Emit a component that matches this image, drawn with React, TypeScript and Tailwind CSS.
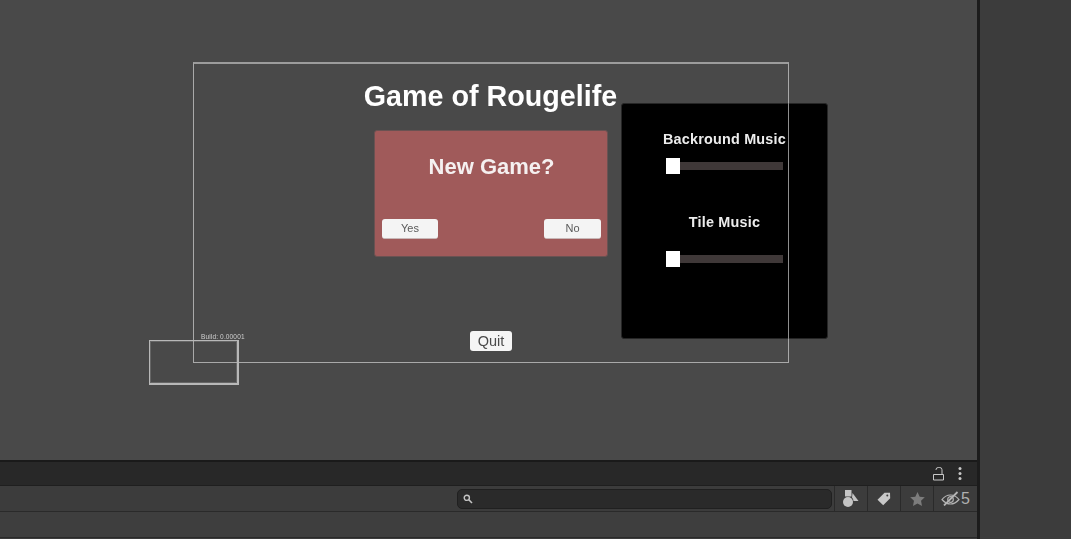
const sans = "font-['Liberation_Sans',Arial,sans-serif]";

function SliderLabel({ label, className }: { label: string; className: string }) {
  return (
    <div className={`flex flex-col items-center ${className}`}>
      <span className="text-[14.4px] leading-[17px] font-bold tracking-[0.2px] text-[#ececec] blur-[0.4px] whitespace-nowrap">
        {label}
      </span>
    </div>
  );
}

function Slider({ top }: { top: string }) {
  return (
    <div className={`absolute left-[44px] w-[117px] h-4 flex items-center ${top}`}>
      <div className="ml-[7px] h-2 w-[110px] bg-[#3f3838]" />
      <div className="absolute left-0 top-0 h-4 w-[14px] bg-white" />
    </div>
  );
}

function GameCanvas() {
  return (
    <>
      <div className="absolute left-[193px] top-[62px] h-[301px] w-[596px] border border-t-2 border-[#a9a9a9] border-t-[#9c9c9c]" />
      <h1 className="absolute left-[193px] top-[78px] w-[595px] text-center text-[28.7px] leading-9 font-bold text-white blur-[0.4px]">
        Game of Rougelife
      </h1>

      <div className="absolute left-[374px] top-[130px] h-[127px] w-[234px] rounded-[3px] border border-[#6a5252] bg-[#a05a5a] flex flex-col justify-between pl-[7px] pr-[6px] pt-[22px] pb-[17px]">
        <h2 className="text-center text-[22px] leading-7 font-bold text-[#f5f0f0] blur-[0.4px]">New Game?</h2>
        <div className="flex justify-between">
          <button className="h-5 w-[56px] rounded-[3px] bg-[#f4f4f4] text-[11px] text-[#5a5a5a] blur-[0.3px] border-b border-[#c8b8b8]">Yes</button>
          <button className="h-5 w-[57px] rounded-[3px] bg-[#f4f4f4] text-[11px] text-[#5a5a5a] blur-[0.3px] border-b border-[#c8b8b8]">No</button>
        </div>
      </div>

      <div className="absolute left-[621px] top-[103px] h-[236px] w-[207px] rounded-[3px] border border-[#262626] bg-black">
        <SliderLabel label="Backround Music" className="pt-[27px]" />
        <Slider top="top-[54px]" />
        <SliderLabel label="Tile Music" className="pt-[66px]" />
        <Slider top="top-[147px]" />
        {/* canvas outline shows through the panel */}
        <div className="absolute left-[166px] top-[-1px] bottom-[-1px] w-px bg-[#8f8f8f]" />
      </div>

      <button className="absolute left-[470px] top-[331px] h-5 w-[42px] rounded-[3px] bg-[#f5f5f5] text-[14.5px] leading-5 text-[#4a4a4a] blur-[0.3px]">
        Quit
      </button>

      <span className="absolute left-[201px] top-[333px] text-[6.5px] leading-2 tracking-[0.15px] text-[#d0d0d0] blur-[0.3px] whitespace-nowrap">
        Build: 0.00001
      </span>
      <div className="absolute left-[149px] top-[340px] h-[45px] w-[90px] border border-b-2 border-r-2 border-[#b8b8b8] shadow-[inset_0_0_0_1px_rgba(190,190,190,0.25)]" />
    </>
  );
}

function ToolbarButton({ children }: { children: React.ReactNode }) {
  return (
    <div className="h-full w-[33px] flex items-center justify-center border-l border-[#2a2a2a]">{children}</div>
  );
}

export default function App() {
  return (
    <div className={`h-[539px] w-[1071px] overflow-hidden flex bg-[#3c3c3c] ${sans}`}>
      <div className="w-[977px] flex flex-col">
        <div className="relative h-[460px] shrink-0 overflow-hidden bg-[#494949]">
          <GameCanvas />
        </div>
        <div className="h-[2px] shrink-0 bg-[#1a1a1a]" />
        <div className="h-6 shrink-0 flex items-center justify-end gap-[13px] pr-[15px] bg-[#282828] border-b border-[#1f1f1f]">
          <svg width="12" height="14" viewBox="0 0 12 14" fill="none" stroke="#c8c8c8" strokeWidth="1">
            <path d="M3 3V2.800A2.300 2.300 0 0 1 5.300 .5H6.700A2.300 2.300 0 0 1 9 2.800V7" />
            <path d="M.5 7.500h10v5.500H.5z" />
          </svg>
          <svg width="4" height="13" viewBox="0 0 4 13" fill="#c8c8c8">
            <circle cx="2" cy="1.500" r="1.500" />
            <circle cx="2" cy="6.500" r="1.500" />
            <circle cx="2" cy="11.500" r="1.500" />
          </svg>
        </div>
        <div className="h-[26px] shrink-0 flex items-center justify-end bg-[#3c3c3c] border-b border-[#2a2a2a]">
          <div className="mr-[2px] h-5 w-[375px] flex items-center pl-[5px] rounded-[5px] bg-[#2a2a2a] border border-[#202020]">
            <svg width="10" height="10" viewBox="0 0 10 10" fill="none" stroke="#c4c4c4">
              <circle cx="3.800" cy="3.800" r="2.600" strokeWidth="1.400" />
              <path d="M5.800 5.800 9 9" strokeWidth="1.600" />
            </svg>
          </div>
          <ToolbarButton>
            <svg width="16" height="18" viewBox="0 0 16 18" fill="#c4c4c4">
              <rect x="2" y="0" width="6.500" height="6.500" />
              <circle cx="5" cy="12" r="5" />
              <path d="M9.500 3 15.500 11H10.500A6 6 0 0 0 9 7.500z" />
            </svg>
          </ToolbarButton>
          <ToolbarButton>
            <svg width="14" height="14" viewBox="0 0 14 14" fill="#c8c8c8">
              <path d="M7.500.8 13 .7l.2 5.500-7 7.100L.5 7.700z" />
              <circle cx="10.300" cy="3.600" r="1" fill="#3c3c3c" />
            </svg>
          </ToolbarButton>
          <ToolbarButton>
            <svg width="15" height="14" viewBox="0 0 24 23" fill="#7c7c7c">
              <path d="m12 0 3.600 7.600 8.400 1-6.200 5.700L19.400 23 12 18.800 4.600 23l1.600-8.700L0 8.600l8.400-1z" />
            </svg>
          </ToolbarButton>
          <div className="h-full w-[44px] flex items-center gap-[1px] pl-[7px] border-l border-[#2a2a2a] text-[16px] text-[#b0b0b0]">
            <svg width="19" height="15" viewBox="0 0 19 15" fill="none" stroke="#b4b4b4" strokeWidth="1.200">
              <path d="M1 8.500c2.500-3.200 5.300-4.500 8.500-4.500s6 1.300 8.500 4.500c-2.500 3-5.300 4.500-8.500 4.500S3.500 11.500 1 8.500z" />
              <circle cx="9.500" cy="8.500" r="2.800" />
              <path d="M3 14.500 16.500 1" strokeWidth="1.800" />
            </svg>
            <span>5</span>
          </div>
        </div>
        <div className="h-[26px] shrink-0 bg-[#3e3e3e] border-b border-[#2a2a2a]" />
      </div>
      <div className="w-[3px] shrink-0 bg-[#1c1c1c]" />
      <div className="flex-1 bg-[#3c3c3c]" />
    </div>
  );
}
